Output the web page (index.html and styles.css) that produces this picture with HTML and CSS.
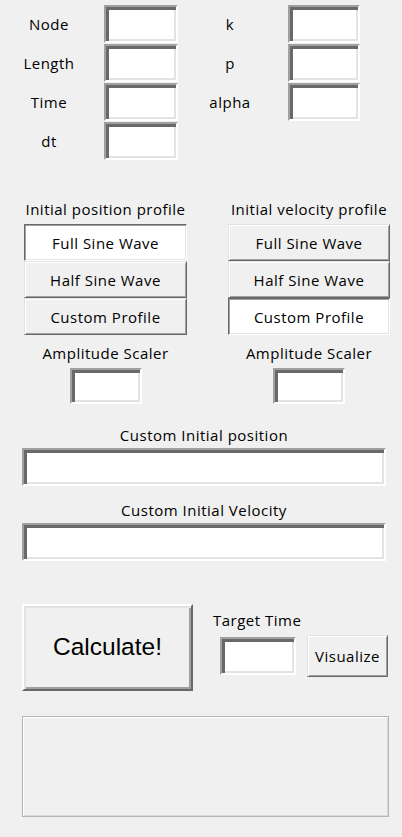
FILE: index.html
```html
<!DOCTYPE html>
<html>
<head>
<meta charset="utf-8">
<link rel="stylesheet" href="styles.css">
</head>
<body>
<div class="app">
  <div class="params">
    <div class="lbl">Node</div><div class="entry"></div>
    <div class="lbl">k</div><div class="entry"></div>
    <div class="lbl">Length</div><div class="entry"></div>
    <div class="lbl">p</div><div class="entry"></div>
    <div class="lbl">Time</div><div class="entry"></div>
    <div class="lbl">alpha</div><div class="entry"></div>
    <div class="lbl">dt</div><div class="entry"></div>
  </div>

  <div class="profiles">
    <div class="pcol">
      <div class="ctitle">Initial position profile</div>
      <div class="opt sel">Full Sine Wave</div>
      <div class="opt">Half Sine Wave</div>
      <div class="opt">Custom Profile</div>
      <div class="amp">Amplitude Scaler</div>
      <div class="entry small"></div>
    </div>
    <div class="pcol">
      <div class="ctitle">Initial velocity profile</div>
      <div class="opt">Full Sine Wave</div>
      <div class="opt">Half Sine Wave</div>
      <div class="opt sel">Custom Profile</div>
      <div class="amp">Amplitude Scaler</div>
      <div class="entry small"></div>
    </div>
  </div>

  <div class="custom">
    <div class="ctitle2 first">Custom Initial position</div>
    <div class="entry wide"></div>
    <div class="ctitle2">Custom Initial Velocity</div>
    <div class="entry wide"></div>
  </div>

  <div class="actions">
    <div class="calc">Calculate!</div>
    <div class="target">
      <div class="tlabel">Target Time</div>
      <div class="trow">
        <div class="entry tentry"></div>
        <div class="vis">Visualize</div>
      </div>
    </div>
  </div>

  <div class="outbox"></div>
</div>
</body>
</html>
```

FILE: styles.css
```css
html, body {
  margin: 0;
  padding: 0;
  background: #f0f0f0;
}
body {
  font-family: "Open Sans", "Noto Sans", sans-serif;
  font-size: 15px;
  letter-spacing: 0.5px;
  color: #000;
  width: 402px;
  height: 837px;
  overflow: hidden;
}
.app {
  display: flex;
  flex-direction: column;
}

.entry {
  box-sizing: border-box;
  background: #fff;
  border: 2px solid;
  border-color: #a0a0a0 #ffffff #ffffff #a0a0a0;
  box-shadow: inset 3px 3px 0 #696969, inset -2px -2px 0 #e3e3e3;
}

.params {
  display: grid;
  grid-template-columns: 104px 74px 110px 72px;
  grid-auto-rows: 38px;
  row-gap: 1px;
  padding-top: 5px;
}
.lbl {
  display: flex;
  align-items: center;
  justify-content: center;
  padding-right: 6px;
}

.profiles {
  display: grid;
  grid-template-columns: 163px 162px;
  column-gap: 41px;
  margin-left: 24px;
  margin-top: 39px;
}
.pcol {
  display: flex;
  flex-direction: column;
  align-items: stretch;
}
.ctitle {
  text-align: center;
  line-height: 20px;
  margin-bottom: 5px;
  white-space: nowrap;
}
.opt {
  box-sizing: border-box;
  height: 37px;
  display: flex;
  align-items: center;
  justify-content: center;
  background: #f0f0f0;
  border: 1px solid;
  border-color: #e3e3e3 #696969 #696969 #e3e3e3;
  box-shadow: inset 1px 1px 0 #ffffff, inset -1px -1px 0 #a0a0a0;
}
.opt.sel {
  background: #fff;
  border-color: #696969 #ffffff #ffffff #696969;
  box-shadow: inset 1px 1px 0 #a0a0a0, inset -1px -1px 0 #e3e3e3;
}
.amp {
  text-align: center;
  line-height: 20px;
  margin-top: 8px;
}
.entry.small {
  width: 72px;
  height: 36px;
  margin-top: 5px;
  align-self: center;
}

.custom {
  display: flex;
  flex-direction: column;
  margin-left: 22px;
  width: 364px;
}
.ctitle2 {
  text-align: center;
  line-height: 20px;
  margin-top: 14px;
}
.ctitle2.first {
  margin-top: 21px;
}
.entry.wide {
  height: 38px;
  margin-top: 3px;
}

.actions {
  display: flex;
  align-items: flex-start;
  margin-top: 43px;
  margin-left: 22px;
}
.calc {
  box-sizing: border-box;
  width: 171px;
  height: 87px;
  display: flex;
  align-items: center;
  justify-content: center;
  font-family: "Liberation Sans", Arial, sans-serif;
  font-size: 24.5px;
  letter-spacing: 0;
  background: #f0f0f0;
  border: 2px solid;
  border-color: #ffffff #696969 #696969 #ffffff;
  box-shadow: inset 2px 2px 0 #e3e3e3, inset -2px -2px 0 #a0a0a0;
  padding-bottom: 2px;
}
.target {
  margin-left: 20px;
  display: flex;
  flex-direction: column;
}
.tlabel {
  line-height: 20px;
  margin-top: 6px;
}
.trow {
  display: flex;
  align-items: center;
  margin-top: 5px;
  margin-left: 7px;
}
.entry.tentry {
  width: 76px;
  height: 38px;
}
.vis {
  box-sizing: border-box;
  width: 81px;
  height: 42px;
  margin-left: 11px;
  display: flex;
  align-items: center;
  justify-content: center;
  background: #f0f0f0;
  border: 1px solid;
  border-color: #e3e3e3 #696969 #696969 #e3e3e3;
  box-shadow: inset 1px 1px 0 #ffffff, inset -1px -1px 0 #a0a0a0;
}

.outbox {
  box-sizing: border-box;
  margin-top: 25px;
  margin-left: 22px;
  width: 367px;
  height: 101px;
  border: 1px solid #b4b4b4;
  box-shadow: inset 1px 1px 0 #ffffff, 0 0 0 1px #d9d9d9 inset;
  background: #f0f0f0;
}
```
